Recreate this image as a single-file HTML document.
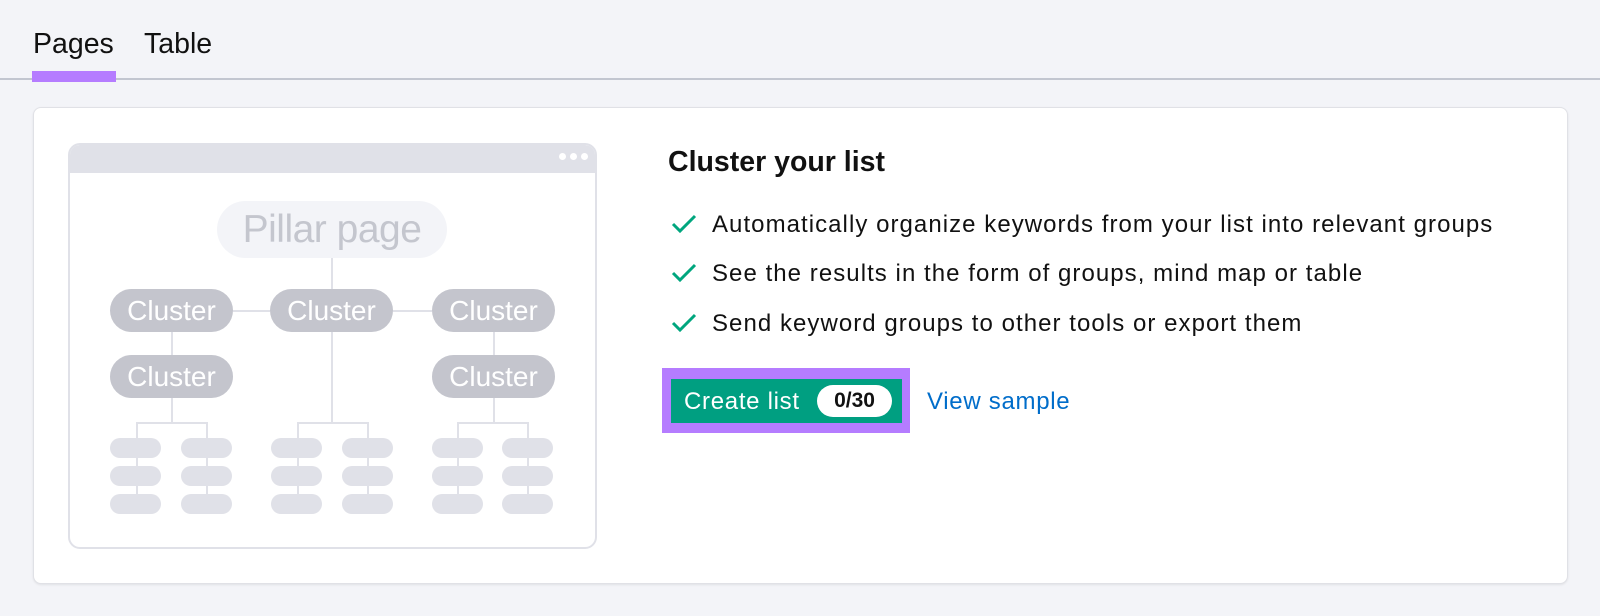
<!DOCTYPE html>
<html><head><meta charset="utf-8"><style>
*{margin:0;padding:0;box-sizing:border-box}
body{width:1600px;height:616px;background:#f3f4f8;font-family:"Liberation Sans",sans-serif;position:relative;overflow:hidden;color:#111}
.a{position:absolute}
.tab{font-size:28.5px;top:28px;color:#111}
.line{background:#e0e1e8;position:absolute}
.cl{position:absolute;background:#c4c5cd;color:#fff;border-radius:22px;font-size:28px;text-align:center;line-height:43px;height:43px;width:123px}
.sp{position:absolute;background:#e0e1e8;border-radius:10px;width:51px;height:20px}
.bul{position:absolute;left:712px;font-size:24px;letter-spacing:1.05px;color:#111}
.chk{position:absolute;left:671px}
</style></head><body>
<div class="a tab" style="left:33px">Pages</div>
<div class="a tab" style="left:144px">Table</div>
<div class="a" style="left:0;top:78px;width:1600px;height:1.5px;background:#c2c6d0"></div>
<div class="a" style="left:32px;top:71px;width:84px;height:11px;background:#b57cff"></div>

<div class="a" style="left:33px;top:107px;width:1535px;height:477px;background:#fff;border:1px solid #e0e1e6;border-radius:8px;box-shadow:0 1px 2px rgba(0,0,0,.08)"></div>

<div class="a" style="left:68px;top:143px;width:529px;height:406px;border:2px solid #e0e1e8;border-radius:12px;overflow:hidden">
 <div style="height:28px;background:#e0e1e8"></div>
</div>
<div class="a" style="left:559px;top:153px;width:7px;height:7px;border-radius:50%;background:#fff"></div>
<div class="a" style="left:570px;top:153px;width:7px;height:7px;border-radius:50%;background:#fff"></div>
<div class="a" style="left:581px;top:153px;width:7px;height:7px;border-radius:50%;background:#fff"></div>

<div class="line" style="left:331px;top:258px;width:2px;height:165px"></div>
<div class="line" style="left:233px;top:310px;width:37px;height:2px"></div>
<div class="line" style="left:393px;top:310px;width:39px;height:2px"></div>
<div class="line" style="left:171px;top:332px;width:2px;height:92px"></div>
<div class="line" style="left:493px;top:332px;width:2px;height:92px"></div>
<div class="line" style="left:136px;top:422px;width:71px;height:2px"></div>
<div class="line" style="left:297px;top:422px;width:71px;height:2px"></div>
<div class="line" style="left:457px;top:422px;width:71px;height:2px"></div>
<div class="line" style="left:136px;top:422px;width:2px;height:80px"></div>
<div class="line" style="left:206px;top:422px;width:2px;height:80px"></div>
<div class="line" style="left:297px;top:422px;width:2px;height:80px"></div>
<div class="line" style="left:367px;top:422px;width:2px;height:80px"></div>
<div class="line" style="left:457px;top:422px;width:2px;height:80px"></div>
<div class="line" style="left:527px;top:422px;width:2px;height:80px"></div>

<div class="a" style="left:217px;top:201px;width:230px;height:57px;border-radius:29px;background:#f3f4f8;color:#c4c6ce;font-size:39px;letter-spacing:-0.5px;text-align:center;line-height:57px">Pillar page</div>
<div class="cl" style="left:110px;top:289px">Cluster</div>
<div class="cl" style="left:270px;top:289px">Cluster</div>
<div class="cl" style="left:432px;top:289px">Cluster</div>
<div class="cl" style="left:110px;top:355px">Cluster</div>
<div class="cl" style="left:432px;top:355px">Cluster</div>

<div class="sp" style="left:110px;top:438px"></div><div class="sp" style="left:181px;top:438px"></div>
<div class="sp" style="left:271px;top:438px"></div><div class="sp" style="left:342px;top:438px"></div>
<div class="sp" style="left:432px;top:438px"></div><div class="sp" style="left:502px;top:438px"></div>
<div class="sp" style="left:110px;top:466px"></div><div class="sp" style="left:181px;top:466px"></div>
<div class="sp" style="left:271px;top:466px"></div><div class="sp" style="left:342px;top:466px"></div>
<div class="sp" style="left:432px;top:466px"></div><div class="sp" style="left:502px;top:466px"></div>
<div class="sp" style="left:110px;top:494px"></div><div class="sp" style="left:181px;top:494px"></div>
<div class="sp" style="left:271px;top:494px"></div><div class="sp" style="left:342px;top:494px"></div>
<div class="sp" style="left:432px;top:494px"></div><div class="sp" style="left:502px;top:494px"></div>

<div class="a" style="left:668px;top:146px;font-size:28.5px;font-weight:bold">Cluster your list</div>
<svg class="chk" style="top:213px" width="26" height="22" viewBox="0 0 26 22"><path d="M2 11l7 7L24 3" fill="none" stroke="#00a67e" stroke-width="3"/></svg>
<svg class="chk" style="top:262px" width="26" height="22" viewBox="0 0 26 22"><path d="M2 11l7 7L24 3" fill="none" stroke="#00a67e" stroke-width="3"/></svg>
<svg class="chk" style="top:312px" width="26" height="22" viewBox="0 0 26 22"><path d="M2 11l7 7L24 3" fill="none" stroke="#00a67e" stroke-width="3"/></svg>
<div class="bul" style="top:211px">Automatically organize keywords from your list into relevant groups</div>
<div class="bul" style="top:260px">See the results in the form of groups, mind map or table</div>
<div class="bul" style="top:310px">Send keyword groups to other tools or export them</div>

<div class="a" style="left:662px;top:368px;width:248px;height:65px;background:#b57cff"></div>
<div class="a" style="left:671px;top:379px;width:231px;height:44px;background:#009f81"></div>
<div class="a" style="left:684px;top:388px;color:#fff;font-size:24px;letter-spacing:0.7px">Create list</div>
<div class="a" style="left:817px;top:385px;width:75px;height:32px;border-radius:16px;background:#fff;color:#111;font-size:21px;font-weight:bold;text-align:center;line-height:32px">0/30</div>
<div class="a" style="left:927px;top:388px;color:#006dca;font-size:24px;letter-spacing:0.7px">View sample</div>
</body></html>
